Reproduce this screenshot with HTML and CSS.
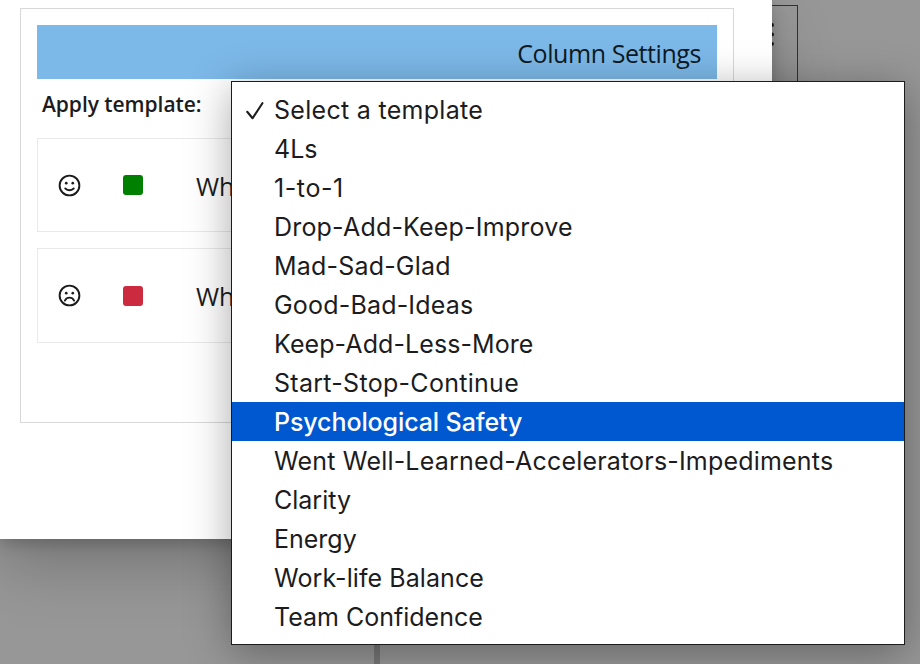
FILE: index.html
```
<!DOCTYPE html>
<html lang="en">
<head>
<meta charset="utf-8">
<title>Column Settings</title>
<link rel="stylesheet" href="styles.css">
</head>
<body>
<div class="board-column"><svg class="more" viewBox="0 0 6 24"><circle cx="3" cy="3" r="1.9"/><circle cx="3" cy="12.4" r="1.9"/><circle cx="3" cy="21.8" r="1.9"/></svg></div>
<div class="divider"></div>
<main class="dialog">
  <section class="panel">
    <header class="panel-header"><span>Column Settings</span></header>
    <div class="template-label"><span>Apply template:</span></div>
    <div class="column-row">
      <svg class="face" viewBox="0 0 24 24"><circle cx="12" cy="12" r="10.3"/><path d="M7.6 15.1Q12 19 16.4 15.1"/><circle class="eye" cx="8.6" cy="9.6" r="1.4"/><circle class="eye" cx="15.4" cy="9.6" r="1.4"/></svg>
      <i class="swatch green"></i><span class="column-name">Wh</span>
    </div>
    <div class="column-row second">
      <svg class="face" viewBox="0 0 24 24"><circle cx="12" cy="12" r="10.3"/><path d="M7.2 17.3C9.2 13.2 14.8 13.2 16.8 17.3"/><circle class="eye" cx="8.6" cy="9.6" r="1.4"/><circle class="eye" cx="15.4" cy="9.6" r="1.4"/></svg>
      <i class="swatch red"></i><span class="column-name">Wh</span>
    </div>
  </section>
</main>
<ul class="menu">
  <li class="wider"><svg class="check" viewBox="0 0 18 18"><path d="M1.2 9.8 6.6 16.2 16.4 1.2"/></svg><span>Select a template</span></li>
  <li><span>4Ls</span></li>
  <li class="widest"><span>1-to-1</span></li>
  <li class="wide"><span>Drop-Add-Keep-Improve</span></li>
  <li class="wide"><span>Mad-Sad-Glad</span></li>
  <li class="wide"><span>Good-Bad-Ideas</span></li>
  <li class="slight"><span>Keep-Add-Less-More</span></li>
  <li class="wider"><span>Start-Stop-Continue</span></li>
  <li class="active"><span>Psychological Safety</span></li>
  <li class="wide"><span>Went Well-Learned-Accelerators-Impediments</span></li>
  <li><span>Clarity</span></li>
  <li><span>Energy</span></li>
  <li class="slight"><span>Work-life Balance</span></li>
  <li><span>Team Confidence</span></li>
</ul>
</body>
</html>
```
FILE: styles.css
```
* { box-sizing: border-box; }
body {
  margin: 0;
  width: 920px;
  height: 664px;
  overflow: hidden;
  position: relative;
  background: #979797;
  color: #1c1c1e;
  font-family: "Open Sans", "Noto Sans", sans-serif;
}
.dialog {
  position: relative;
  width: 772px;
  height: 539px;
  padding: 8px 38px 0 20px;
  background: #fff;
  box-shadow: 0 26px 58px rgba(0,0,0,.22), 0 5px 14px rgba(0,0,0,.18);
}
.board-column {
  position: absolute;
  left: 600px;
  top: 5px;
  width: 198px;
  height: 500px;
  border: 1px solid #323232;
}
.more {
  position: absolute;
  right: 22px;
  top: 16px;
  width: 6px;
  height: 24px;
  fill: #111;
}
.divider {
  position: absolute;
  left: 374px;
  top: 539px;
  width: 6px;
  height: 125px;
  background: #777;
}
.panel {
  height: 415px;
  border: 1px solid #d8d8d8;
  padding: 16px;
}
.panel-header {
  display: flex;
  justify-content: flex-end;
  align-items: center;
  height: 54px;
  padding: 1px 16px 0 0;
  background: #7cb8e8;
  color: #0e1a24;
  font-size: 25px;
  letter-spacing: -.42px;
}
.template-label {
  height: 59px;
  padding: 10px 0 0 5px;
  font-size: 21px;
  line-height: 30px;
  font-weight: 600;
  letter-spacing: -.05px;
}
.column-row {
  display: flex;
  align-items: center;
  height: 94px;
  padding-left: 20px;
  border: 1px solid #e9e9e9;
  overflow: hidden;
}
.second { height: 95px; margin-top: 16px; }
.face {
  width: 23px;
  height: 23px;
  fill: none;
  stroke: #1b1b1b;
  stroke-width: 2;
  stroke-linecap: round;
}
.face .eye { fill: #1b1b1b; stroke: none; }
.swatch {
  width: 20px;
  height: 20px;
  margin-left: 42px;
  border-radius: 3px;
}
.green { background: #008000; }
.red { background: #cb2a3f; }
.column-name {
  margin: 1px 0 0 53px;
  font-size: 25px;
  white-space: nowrap;
}
.menu {
  position: absolute;
  left: 231px;
  top: 81px;
  width: 674px;
  height: 564px;
  margin: 0;
  padding: 8px 0;
  list-style: none;
  background: #fff;
  border: 1px solid #1c1c1c;
  box-shadow: 0 8px 40px rgba(0,0,0,.34);
  font: 25px/37px Inter, sans-serif;
}
.menu li {
  display: flex;
  align-items: center;
  height: 39px;
  padding: 2px 0 0 42px;
  position: relative;
  white-space: nowrap;
}
.menu .slight { letter-spacing: .08px; }
.menu .wide { letter-spacing: .19px; }
.menu .wider { letter-spacing: .29px; }
.menu .widest { letter-spacing: .6px; }
.menu .active { background: #0058d0; color: #fff; font-weight: 500; letter-spacing: -.1px; }
.check {
  position: absolute;
  left: 14px;
  top: 12px;
  width: 18px;
  height: 18px;
  fill: none;
  stroke: #1c1c1e;
  stroke-width: 2.1;
  stroke-linecap: round;
  stroke-linejoin: round;
}
```
